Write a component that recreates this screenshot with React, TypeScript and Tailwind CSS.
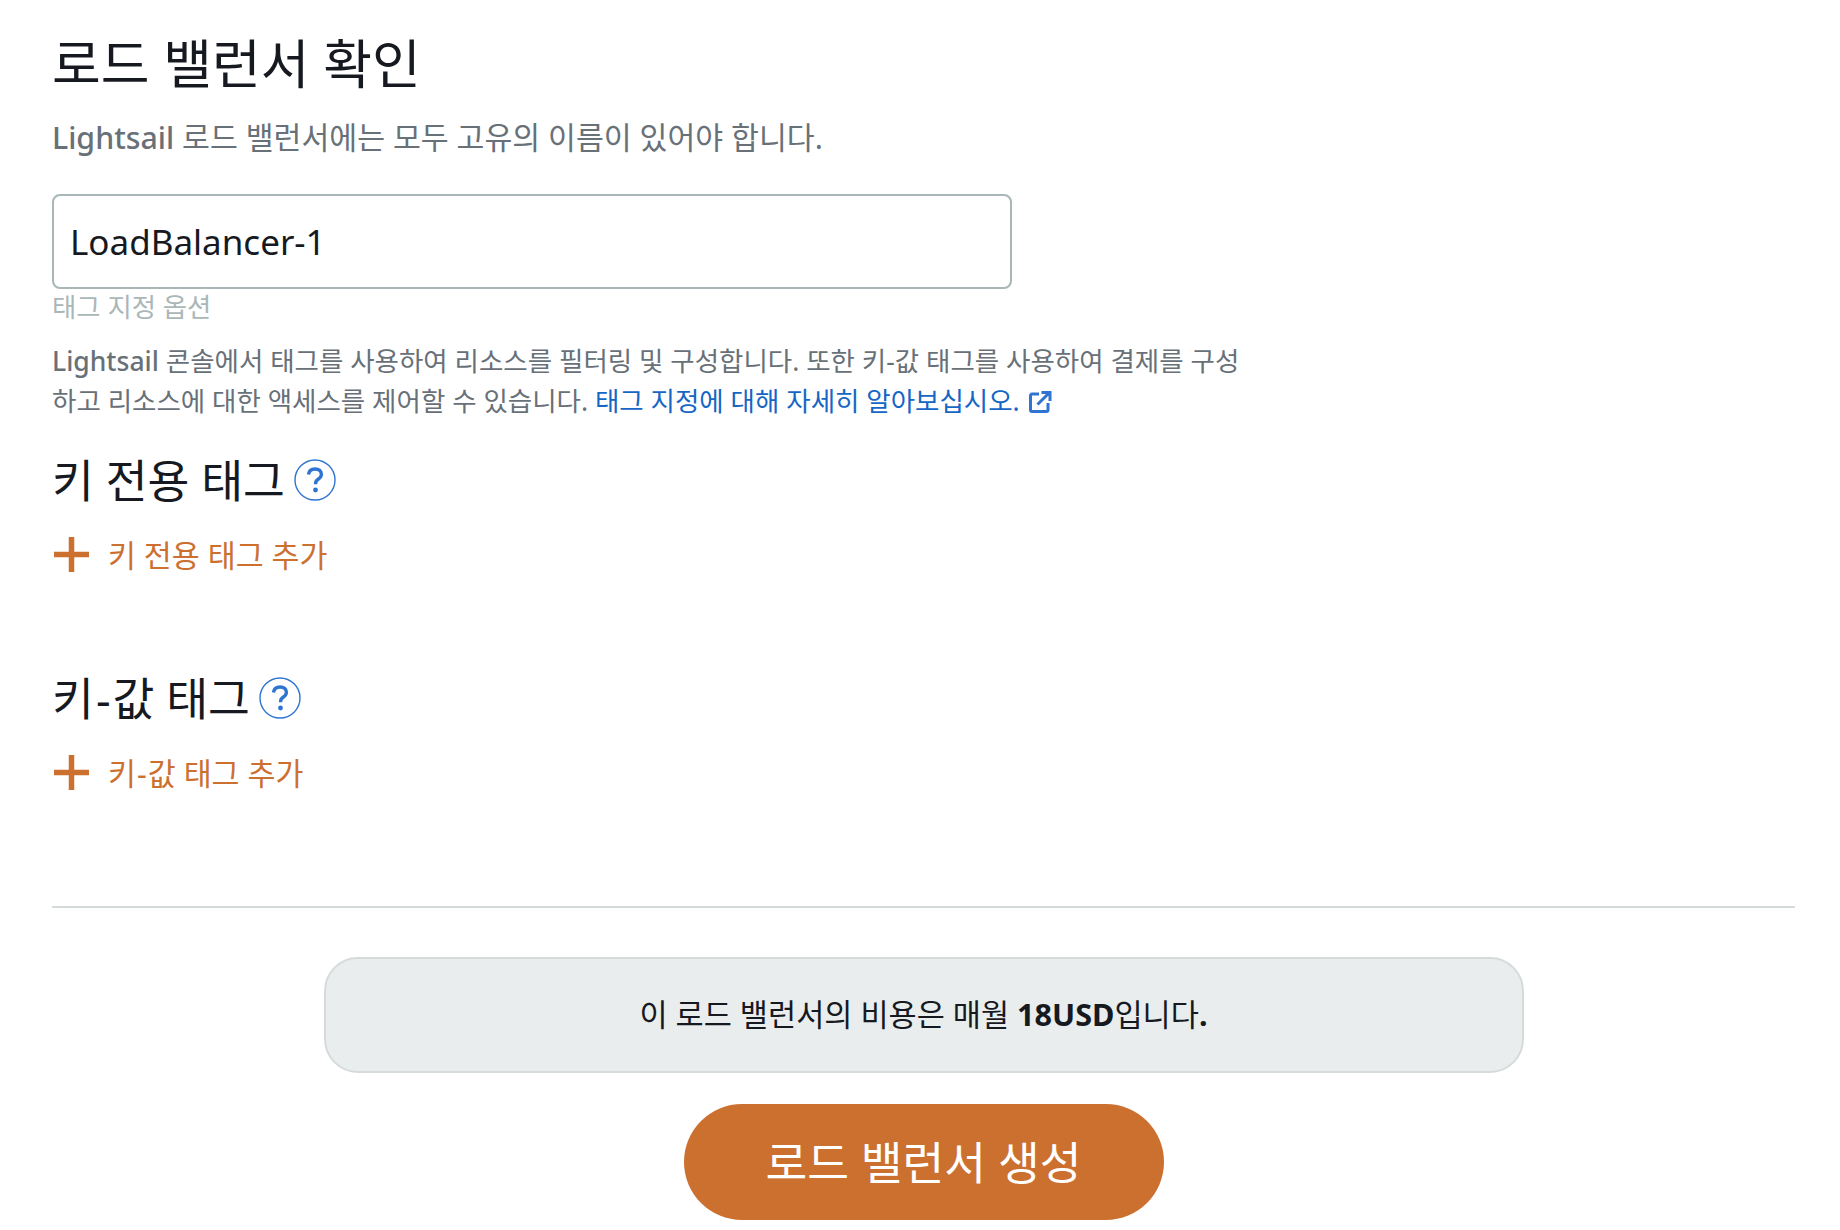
import type { ReactNode } from "react";

const font = { fontFamily: '"Noto Sans", "Noto Sans CJK KR", sans-serif' };

function HelpIcon() {
  return (
    <svg width="42" height="42" viewBox="0 0 42 42" className="shrink-0">
      <circle cx="21" cy="21" r="20" fill="none" stroke="#2f74d0" strokeWidth="1.4" />
      <path d="M14.500 15.500c.4-3.400 3-5.500 6.600-5.500 3.700 0 6.300 2.100 6.300 5.200 0 2.500-1.300 3.800-3.300 5.100-1.700 1.100-2.500 2-2.500 4.200v.7" fill="none" stroke="#2f74d0" strokeWidth="3.400" />
      <circle cx="21.500" cy="31" r="2.400" fill="#2f74d0" />
    </svg>
  );
}

function PlusIcon() {
  return (
    <svg width="35" height="35" viewBox="0 0 35 35" className="shrink-0 ml-[2px] mr-[19px] relative -top-[1px]">
      <path d="M17.500 0v35M0 17.500h35" fill="none" stroke="#cc7030" strokeWidth="5.500" />
    </svg>
  );
}

function TagSection({ title, action, className }: { title: ReactNode; action: ReactNode; className: string }) {
  return (
    <section className={className}>
      <div className="flex items-center gap-[9px] h-[42px]">
        <h2 className="text-[45.500px] leading-[42px] font-normal text-[#16191f]">{title}</h2>
        <HelpIcon />
      </div>
      <button className="flex items-center mt-[36px] h-[36px] text-[30.400px] leading-[36px] text-[#cc7030]">
        <PlusIcon />
        <span className="relative top-[1px]">{action}</span>
      </button>
    </section>
  );
}

export default function App() {
  return (
    <div className="min-h-[1230px] bg-white pl-[52px] pr-[45px] pt-[30px]" style={font}>
      <h1 className="text-[53px] leading-[68px] font-normal text-[#16191f]">로드 밸런서 확인</h1>
      <p className="mt-[18px] text-[30.300px] leading-[44px] text-[#687078]">
        <span className="font-medium">Lightsail</span> 로드 밸런서에는 모두 고유의 이름이 있어야 합니다.
      </p>
      <input
        readOnly
        value="LoadBalancer-1"
        className="block mt-[34px] w-[960px] h-[95px] px-[16px] text-[35px] text-[#16191f] border-2 border-[#aab7b8] rounded-[8px] outline-none"
      />
      <p className="text-[26.400px] leading-[36px] text-[#aab7b8]">태그 지정 옵션</p>
      <p className="mt-[16px] w-[1200px] text-[26.500px] leading-[40px] text-[#687078]">
        <span className="font-medium">Lightsail</span> 콘솔에서 태그를 사용하여 리소스를 필터링 및 구성합니다. 또한 키-값 태그를 사용하여 결제를 구성하고 리소스에 대한 액세스를 제어할 수 있습니다.{" "}
        <a className="text-[#1666c5]">
          태그 지정에 대해 자세히 알아보십시오.
          <svg width="24" height="24" viewBox="0 0 24 24" className="inline-block ml-[8px] align-[-3px]" fill="none" stroke="#2f74d0" strokeWidth="3">
            <path d="M11 4H4a1.500 1.500 0 0 0-1.500 1.500V20A1.500 1.500 0 0 0 4 21.500h14.500A1.500 1.500 0 0 0 20 20v-7" />
            <path d="M9.500 14.500 21 3M13.500 2.500H22V11" />
          </svg>
        </a>
      </p>
      <TagSection className="mt-[38px]" title="키 전용 태그" action="키 전용 태그 추가" />
      <TagSection
        className="mt-[104px]"
        title={<>키<span className="mx-[2px]">-</span>값 태그</>}
        action={<>키<span className="mx-[1px]">-</span>값 태그 추가</>}
      />
      <hr className="mt-[115px] border-0 h-[2px] bg-[#d5dbdb]" />
      <div className="flex flex-col items-center mt-[49px]">
        <div className="flex items-center justify-center w-[1200px] h-[116px] rounded-[34px] border-2 border-[#d5dbdb] bg-[#eaeded] text-[30.600px] text-[#16191f]">
          <span>
            이 로드 밸런서의 비용은 매월 <b>18USD</b>입니다<b>.</b>
          </span>
        </div>
        <button className="mt-[31px] w-[480px] h-[116px] rounded-full bg-[#cc7030] text-[45.400px] text-white">
          로드 밸런서 생성
        </button>
      </div>
    </div>
  );
}
